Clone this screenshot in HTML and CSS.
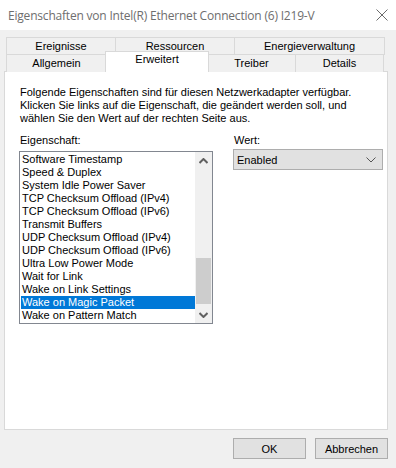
FILE: index.html
```html
<!DOCTYPE html>
<html lang="de">
<head>
    <meta charset="UTF-8">
    <title>Eigenschaften</title>
<link rel="stylesheet" href="styles.css">
</head>
<body>
    <div class="titlebar">
        <span class="title">Eigenschaften von Intel(R) Ethernet Connection (6) I219-V</span>
        <svg class="close" width="12" height="12" viewBox="0 0 12 12">
            <path d="M0.5 0.5 L11.5 11.5 M11.5 0.5 L0.5 11.5" stroke="#6b6b6b" stroke-width="1" fill="none"/>
        </svg>
    </div>

    <div class="tabs">
        <div class="tab-row">
            <div class="tab" style="width:110px">Ereignisse</div>
            <div class="tab" style="width:120px">Ressourcen</div>
            <div class="tab" style="width:151px">Energieverwaltung</div>
        </div>
        <div class="tab-row">
            <div class="tab" style="width:101px">Allgemein</div>
            <div class="tab active" style="width:104px">Erweitert</div>
            <div class="tab" style="width:89px">Treiber</div>
            <div class="tab" style="width:89px">Details</div>
        </div>
    </div>

    <div class="panel">
        <p class="intro">Folgende Eigenschaften sind für diesen Netzwerkadapter verfügbar.<br>
        Klicken Sie links auf die Eigenschaft, die geändert werden soll, und<br>
        wählen Sie den Wert auf der rechten Seite aus.</p>

        <div class="fields">
            <div class="field-left">
                <div class="label">Eigenschaft:</div>
                <div class="listbox">
                    <ul class="items">
                        <li>Software Timestamp</li>
                        <li>Speed &amp; Duplex</li>
                        <li>System Idle Power Saver</li>
                        <li>TCP Checksum Offload (IPv4)</li>
                        <li>TCP Checksum Offload (IPv6)</li>
                        <li>Transmit Buffers</li>
                        <li>UDP Checksum Offload (IPv4)</li>
                        <li>UDP Checksum Offload (IPv6)</li>
                        <li>Ultra Low Power Mode</li>
                        <li>Wait for Link</li>
                        <li>Wake on Link Settings</li>
                        <li class="selected">Wake on Magic Packet</li>
                        <li>Wake on Pattern Match</li>
                    </ul>
                    <div class="scrollbar">
                        <div class="arrow">
                            <svg width="9" height="6" viewBox="0 0 9 6"><path d="M0.5 5 L4.5 1 L8.5 5" stroke="#606060" stroke-width="2" fill="none"/></svg>
                        </div>
                        <div class="track"><div class="thumb"></div></div>
                        <div class="arrow">
                            <svg width="9" height="6" viewBox="0 0 9 6"><path d="M0.5 1 L4.5 5 L8.5 1" stroke="#606060" stroke-width="2" fill="none"/></svg>
                        </div>
                    </div>
                </div>
            </div>
            <div class="field-right">
                <div class="label">Wert:</div>
                <div class="combo">
                    <span>Enabled</span>
                    <svg width="10" height="6" viewBox="0 0 10 6"><path d="M0.5 0.5 L5 5 L9.5 0.5" stroke="#555" stroke-width="1" fill="none"/></svg>
                </div>
            </div>
        </div>
    </div>

    <div class="buttons">
        <button class="btn">OK</button>
        <button class="btn">Abbrechen</button>
    </div>
</body>
</html>
```

FILE: styles.css
```css
* {
    box-sizing: border-box;
}

body {
    margin: 0;
    width: 396px;
    height: 468px;
    background-color: #f0f0f0;
    font-family: "Liberation Sans", Arial, sans-serif;
    font-size: 11px;
    color: #000;
    overflow: hidden;
}

.titlebar {
    height: 30px;
    background-color: #fff;
    display: flex;
    align-items: center;
    justify-content: space-between;
    padding: 0 8px;
}

.title {
    font-family: "Open Sans", "Noto Sans", sans-serif;
    font-size: 12px;
    color: #6e6e6e;
    letter-spacing: -0.2px;
}

.tabs {
    margin: 7px 9px 0 6px;
    position: relative;
    z-index: 1;
}

.tab-row {
    display: flex;
    height: 18px;
}

.tab-row + .tab-row {
    margin-top: -1px;
}

.tab {
    flex-shrink: 0;
    height: 18px;
    border: 1px solid #d9d9d9;
    border-bottom: none;
    margin-right: -1px;
    background-color: #f0f0f0;
    text-align: center;
    line-height: 17px;
}

.tab:last-child {
    margin-right: 0;
}

.tab.active {
    background-color: #fff;
    height: 21px;
    margin-top: -3px;
    margin-left: -1px;
    margin-right: -2px;
    line-height: 15px;
    position: relative;
    z-index: 2;
}

.panel {
    margin: -1px 8px 0 4px;
    height: 359px;
    background-color: #fff;
    border: 1px solid #d9d9d9;
    padding: 14px 4px 0 14px;
}

.intro {
    margin: 0;
    line-height: 13px;
    padding-left: 1px;
}

.fields {
    display: flex;
    margin-top: 9px;
}

.field-left {
    flex-shrink: 0;
    width: 194px;
}

.field-right {
    flex-shrink: 0;
    margin-left: 20px;
    width: 150px;
}

.label {
    line-height: 13px;
    padding-left: 1px;
}

.field-left .label {
    margin-bottom: 4px;
}

.field-right .label {
    margin-bottom: 2px;
}

.listbox {
    height: 173px;
    border: 1px solid #828790;
    display: flex;
}

.items {
    list-style: none;
    margin: 0;
    padding: 1px 0 0 1px;
    flex: 1;
}

.items li {
    height: 13px;
    line-height: 13px;
    padding-left: 1px;
    white-space: nowrap;
}

.items li.selected {
    background-color: #0078d7;
    color: #fff;
}

.scrollbar {
    width: 17px;
    background-color: #f0f0f0;
    display: flex;
    flex-direction: column;
}

.arrow {
    height: 17px;
    display: flex;
    align-items: center;
    justify-content: center;
}

.track {
    flex: 1;
    display: flex;
    flex-direction: column;
    justify-content: flex-end;
    padding: 0 1px 2px 1px;
}

.thumb {
    height: 46px;
    background-color: #cdcdcd;
}

.combo {
    height: 21px;
    background-color: #e1e1e1;
    border: 1px solid #adadad;
    display: flex;
    align-items: center;
    justify-content: space-between;
    padding: 0 6px 0 3px;
}

.buttons {
    display: flex;
    justify-content: flex-end;
    gap: 9px;
    margin: 8px 8px 0 0;
}

.btn {
    width: 73px;
    height: 21px;
    background-color: #e1e1e1;
    border: 1px solid #adadad;
    font-family: "Liberation Sans", Arial, sans-serif;
    font-size: 11px;
    color: #000;
    padding: 0;
}
```
